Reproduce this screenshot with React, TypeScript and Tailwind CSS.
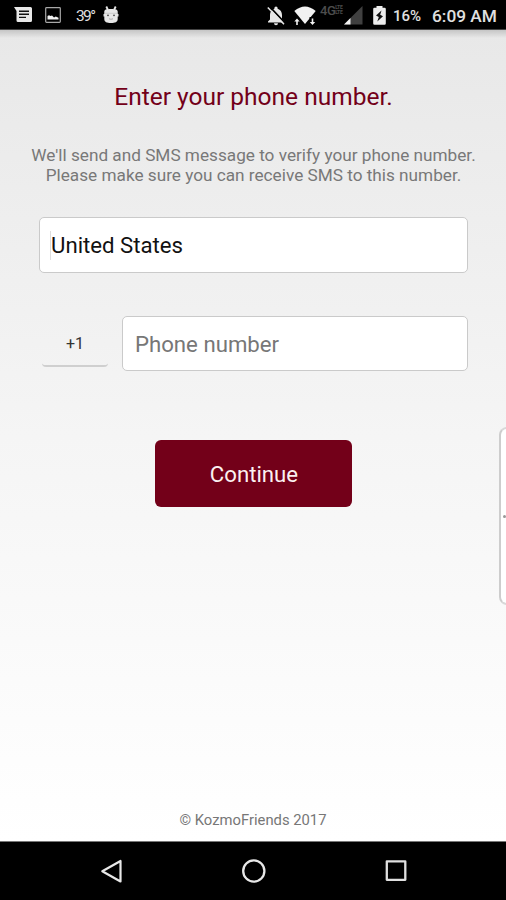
import React from 'react';

const MessageIcon = () => (
  <svg width="19" height="18" viewBox="0 0 19 18" fill="#e8e8e8">
    <path d="M0 1h16.500a1.500 1.500 0 0 1 1.500 1.500v12a1.500 1.500 0 0 1-1.500 1.500H4a1.500 1.500 0 0 1-1.500-1.500V5z" />
    <path d="M5 5.200h10M5 8.300h10M5 11.400h7" stroke="#111" strokeWidth="1.400" />
  </svg>
);

const ImageIcon = () => (
  <svg width="16" height="16" viewBox="0 0 16 16" fill="none">
    <rect x="0.700" y="0.700" width="14.600" height="14.600" rx="0.800" stroke="#a8a8a8" strokeWidth="1.200" />
    <path d="M2.500 12.500V9l1.500-.8 1.500.8L7 8.500l2 2 1.800-1 2.700 1.300v1.700z" fill="#f2f2f2" />
  </svg>
);

const AndroidIcon = () => (
  <svg width="16" height="18" viewBox="0 0 16 18" fill="#e6e6e6">
    <path d="M3.300 0.500 5 4M12.700 0.500 11 4" stroke="#e6e6e6" strokeWidth="1.800" />
    <path d="M1.300 8V5.500C1.300 3.800 3 3 8 3s6.700.8 6.700 2.500V8h.8v2.500h-.8V13c0 3-2.500 4-6.700 4s-6.700-1-6.700-4v-2.500H.5V8z" />
    <path d="M1.500 7.300h13" stroke="#c4c4c4" strokeWidth="0.800" />
    <circle cx="5" cy="9.300" r="0.900" fill="#444" />
    <circle cx="11" cy="9.300" r="0.900" fill="#444" />
    <path d="M6 12.800q2 1 4 0" stroke="#aaa" strokeWidth="1" fill="none" />
  </svg>
);

const BellOffIcon = () => (
  <svg width="18" height="20" viewBox="0 0 18 20" fill="#e8e8e8">
    <path d="M9 0.500a1.600 1.600 0 0 1 1.600 1.600v.6C13.500 3.500 15 6 15 9v4.500l2 2v1H1v-1l2-2V9c0-3 1.500-5.500 4.400-6.300v-.6A1.600 1.600 0 0 1 9 .5zM7 17.300h4a2 2 0 0 1-4 0z" />
    <path d="M2.500 0.500 18.500 17.500" stroke="#000" strokeWidth="1.800" />
    <path d="M0.800 1.500 17 18.300" stroke="#e8e8e8" strokeWidth="1.500" />
  </svg>
);

const WifiIcon = () => (
  <svg width="22" height="20" viewBox="0 0 22 20" fill="#f2f2f2">
    <path d="M0.300 5Q11-4 21.700 5L11 18z" />
    <path d="M-.5 15.500 3 11l3.500 4.500V20h-7zM22.500 15.500 19 11h-3.500v9h7z" fill="#000" />
    <path d="M3 12.500 5.700 15.500H3.800V19H2.200v-3.500H.3zM18.500 19l-2.700-3h1.900v-3.500h1.600V16h1.900z" />
  </svg>
);

const SignalIcon = () => (
  <svg width="19" height="19" viewBox="0 0 19 19">
    <path d="M0 18.500 18.500 0v18.500z" fill="#404040" />
    <path d="M0 18.500 6.500 12v6.500z" fill="#f2f2f2" />
  </svg>
);

const BatteryIcon = () => (
  <svg width="13" height="19" viewBox="0 0 13 19">
    <path d="M3.500 0h6v1.700h2A1.300 1.300 0 0 1 12.800 3v14.500a1.300 1.300 0 0 1-1.300 1.300h-10A1.300 1.300 0 0 1 .2 17.500V3a1.300 1.300 0 0 1 1.300-1.300h2z" fill="#ededed" />
    <path d="M8.500 4.500 3 9.500l2.800 1.500-1.500 4.500L10 10.300 7.200 8.800z" fill="#111" />
  </svg>
);

const StatusBar: React.FC = () => (
  <header className="flex h-[30px] shrink-0 items-start bg-black border-b border-[#444] text-[#e0e0e0]">
    <div className="ml-[14px] mt-[6px]"><MessageIcon /></div>
    <div className="ml-[12px] mt-[7px]"><ImageIcon /></div>
    <span className="ml-[15px] mt-[7px] w-[27px] whitespace-nowrap text-[15.500px] leading-[19px] tracking-[-1.600px]">39°</span>
    <div className="mt-[6px]"><AndroidIcon /></div>
    <div className="ml-[148px] mt-[6px]"><BellOffIcon /></div>
    <div className="ml-[9px] mt-[6px]"><WifiIcon /></div>
    <span className="ml-[4px] mt-[4px] flex w-[25px] text-[13px] leading-[13px] font-medium text-[#4d4d4d] tracking-[-0.500px]">
      4G<span className="mt-[1px] text-[5px] leading-[5px] font-bold tracking-[-0.300px]">LTE<br />LTE</span>
    </span>
    <div className="-ml-px mt-[6px]"><SignalIcon /></div>
    <div className="ml-[10px] mt-[6px]"><BatteryIcon /></div>
    <span className="ml-[7px] mt-[6px] w-[39px] whitespace-nowrap text-[15px] leading-[20px] font-medium">16%</span>
    <span className="mt-[6px] whitespace-nowrap text-[17.300px] leading-[20px] font-medium">6:09 AM</span>
  </header>
);

const NavBar: React.FC = () => (
  <nav className="flex h-[59px] shrink-0 items-start border-t border-[#777] bg-black">
    <svg className="ml-[100px] mt-[17px]" width="23" height="26" viewBox="0 0 23 26" fill="none" stroke="#e8e8e8" strokeWidth="2.200" strokeLinejoin="round">
      <path d="M20.500 2v20.500L2.300 12.300z" />
    </svg>
    <svg className="ml-[118px] mt-[16px]" width="26" height="26" viewBox="0 0 26 26" fill="none" stroke="#e8e8e8" strokeWidth="2.300">
      <circle cx="12.800" cy="13" r="10.600" />
    </svg>
    <svg className="ml-[118px] mt-[17px]" width="23" height="23" viewBox="0 0 23 23" fill="none" stroke="#e0e0e0" strokeWidth="2.300" strokeLinejoin="round">
      <rect x="1.800" y="2.300" width="18.500" height="18.500" />
    </svg>
  </nav>
);

export default function App() {
  return (
    <div className="relative flex h-[900px] w-[506px] flex-col overflow-hidden bg-black font-[Roboto,sans-serif]">
      <StatusBar />

      <main className="flex flex-1 flex-col items-center bg-linear-to-b from-[#e8e8e8] via-[#f5f5f5] to-white">
        <div className="h-[8px] w-full shrink-0 bg-linear-to-b from-black/15 to-transparent" />
        <h1 className="mt-[44px] ml-px whitespace-nowrap text-[24.500px] leading-[30px] text-[#730019]">Enter your phone number.</h1>
        <p className="mt-[33px] ml-px whitespace-nowrap text-center text-[17.200px] leading-[20px] text-[#787878]">
          We'll send and SMS message to verify your phone number.
          <br />
          Please make sure you can receive SMS to this number.
        </p>

        <form className="mt-[32px] ml-px w-[429px]">
          <div className="flex h-[56px] items-center rounded-[5px] border border-[#cacaca] bg-white pl-[10px]">
            <span className="h-[29px] w-px bg-[#dedede]" />
            <span className="text-[22.200px] leading-[28px] text-[#111]">United States</span>
          </div>
          <div className="mt-[43px] flex">
            <div className="ml-[3px] mr-[14px] h-[51px] w-[66px] rounded-b-[4px] border-b-2 border-[#cfcfcf] pt-[16px] text-center text-[16px] leading-[24px] text-[#333]">+1</div>
            <div className="flex h-[55px] flex-1 items-center rounded-[5px] border border-[#cacaca] bg-white pl-[12px] text-[22.200px] leading-[28px] text-[#777]">
              Phone number
            </div>
          </div>
        </form>

        <button className="mt-[69px] h-[67px] w-[197px] rounded-[6px] bg-[#730019] pt-[2px] pl-[2px] text-[22.200px] text-[#fbf0f1]">Continue</button>

        <footer className="mt-auto mb-[11px] whitespace-nowrap text-[14.800px] leading-[20px] text-[#777]">© KozmoFriends 2017</footer>
      </main>

      <NavBar />

      {/* edge drawer handle */}
      <div className="absolute left-[499px] top-[427px] flex h-[178px] w-[20px] items-center rounded-l-[8px] border-2 border-[#cdcdcd] border-y-[#d8d8d8] bg-white">
        <span className="ml-[2px] size-[3px] rounded-full bg-[#999]" />
      </div>
    </div>
  );
}
